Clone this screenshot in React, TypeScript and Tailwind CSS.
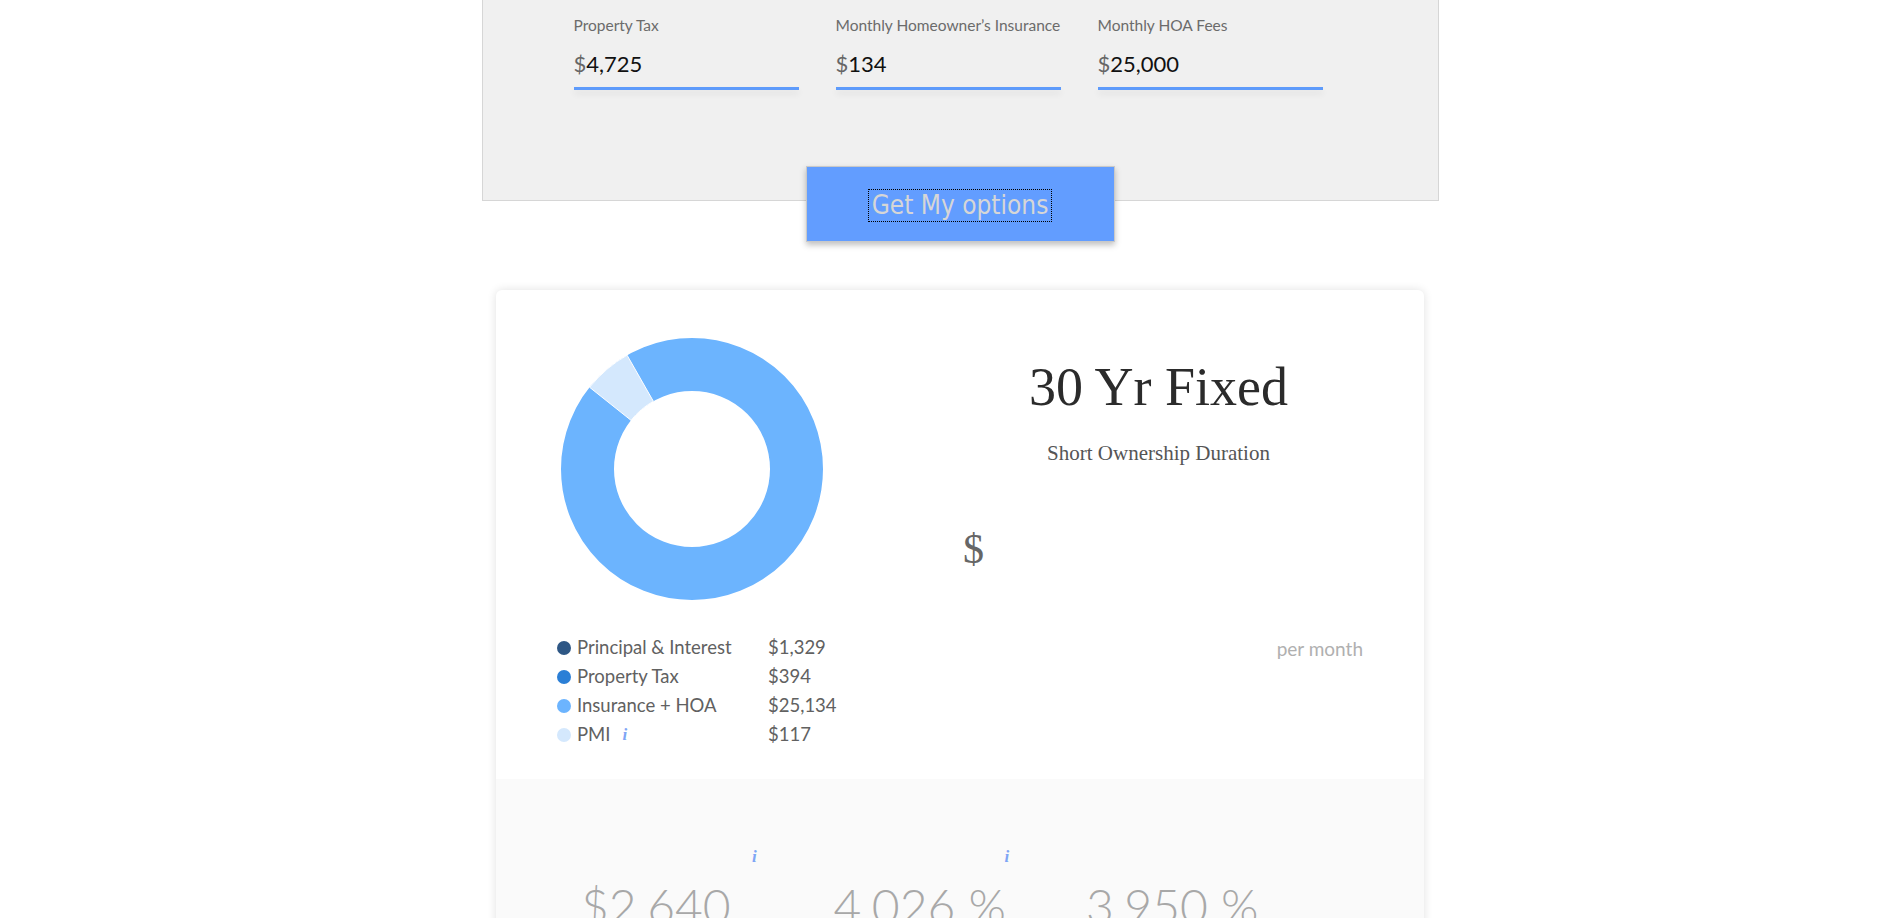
const inputs = [
  { label: 'Property Tax', value: '4,725' },
  { label: 'Monthly Homeowner’s Insurance', value: '134' },
  { label: 'Monthly HOA Fees', value: '25,000' },
];

const legend = [
  { color: 'bg-[#2e5785]', label: 'Principal & Interest', value: '$1,329' },
  { color: 'bg-[#2b7fd6]', label: 'Property Tax', value: '$394' },
  { color: 'bg-[#6cb4fe]', label: 'Insurance + HOA', value: '$25,134' },
  { color: 'bg-[#d4e8fd]', label: 'PMI', value: '$117', info: true },
];

const stats = [
  { value: '$2,640', info: true },
  { value: '4,026 %', info: true },
  { value: '3,950 %', info: false },
];

const Info = ({ className = '' }: { className?: string }) => (
  <span
    className={`italic font-bold text-[#7ea6f5] text-[17px] leading-[24px] ${className}`}
    style={{ fontFamily: '"Liberation Serif", "Times New Roman", serif' }}
  >
    i
  </span>
);

const Donut = () => (
  <svg width="262" height="262" viewBox="0 0 262 262">
    <circle cx="131" cy="131" r="104.5" fill="none" stroke="#6cb4fe" strokeWidth="53" />
    <path
      d="M 28.6 49.3 A 131 131 0 0 1 66.1 17.2 L 92.35 63.25 A 78 78 0 0 0 70.04 82.34 Z"
      fill="#d4e8fd"
      stroke="#ffffff"
      strokeWidth="1"
    />
  </svg>
);

const App = () => {
  return (
    <div
      className="min-h-screen bg-white flex flex-col items-center pl-[26px] overflow-hidden"
      style={{ fontFamily: 'Lato, "Noto Sans", sans-serif' }}
    >
      {/* inputs panel */}
      <div className="w-[957px] h-[201px] bg-[#f0f0f0] border-x border-b border-[#d6d6d6] pl-[91px] pt-[15px] flex gap-[37px]">
        {inputs.map((f) => (
          <div key={f.label} className="w-[225px]">
            <div className="text-[15.5px] leading-[20px] text-[#6b6b6b] whitespace-nowrap">{f.label}</div>
            <div className="mt-[15px] text-[22px] leading-[28px] text-[#111]">
              <span className="text-[#666]">$</span>
              {f.value}
            </div>
            <div className="mt-[9px] h-[3px] bg-[#5e9bfb] shadow-[0_4px_6px_rgba(0,0,0,0.08)]" />
          </div>
        ))}
      </div>

      <button
        className="relative z-10 -mt-[35px] w-[309px] h-[76px] bg-[#629dff] border border-[#c9c9c9] shadow-[0_3px_6px_rgba(0,0,0,0.25)] flex items-center justify-center"
      >
        <span
          className="mt-[2px] text-[26px] leading-[31px] text-[#d6d6d6] px-[3px] outline-1 outline-dotted outline-black"
          style={{ fontFamily: '"DejaVu Sans Condensed", "DejaVu Sans", Tahoma, sans-serif', fontStretch: 'condensed' }}
        >
          Get My options
        </span>
      </button>

      {/* result card */}
      <div className="mt-[48px] w-[928px] bg-white rounded-[6px] shadow-[0_0_10px_rgba(0,0,0,0.12)] overflow-hidden">
        <div className="flex pl-[61px] pr-[61px] pt-[48px] pb-[30px]">
          <div className="w-[406px]">
            <div className="ml-[4px]">
              <Donut />
            </div>
            <div className="mt-[33px]">
              {legend.map((l) => (
                <div key={l.label} className="flex items-center h-[29px] text-[18.5px] text-[#616161]">
                  <span className={`w-[14px] h-[14px] rounded-full ${l.color}`} />
                  <span className="ml-[6px] w-[191px] flex items-center">
                    {l.label}
                    {l.info && <Info className="ml-[12px]" />}
                  </span>
                  <span>{l.value}</span>
                </div>
              ))}
            </div>
          </div>
          <div className="flex-1 flex flex-col" style={{ fontFamily: '"Liberation Serif", "Times New Roman", serif' }}>
            <div className="mt-[22px] pr-[9px] text-center text-[54px] leading-[54px] text-[#2b2b2b]">30 Yr Fixed</div>
            <div className="mt-[26px] pr-[9px] text-center text-[21px] leading-[26px] text-[#555]">Short Ownership Duration</div>
            <div className="mt-[62px] text-[42px] leading-[42px] text-[#666]">$</div>
            <div
              className="mt-[67px] text-right text-[19px] leading-[24px] text-[#b0b0b0]"
              style={{ fontFamily: 'Lato, "Noto Sans", sans-serif' }}
            >
              per month
            </div>
          </div>
        </div>

        <div className="bg-[#fafafa] pl-[85px] pt-[65px] pb-[40px] grid grid-cols-[252.5px_252.5px_252.5px]">
          {stats.map((s) => (
            <div key={s.value}>
              <div className="h-[24px] pl-[171px]">{s.info && <Info />}</div>
              <div className="mt-[9px] text-[48px] leading-[58px] font-light text-[#a8a8a8]">{s.value}</div>
            </div>
          ))}
        </div>
      </div>
    </div>
  );
};

export default App;
